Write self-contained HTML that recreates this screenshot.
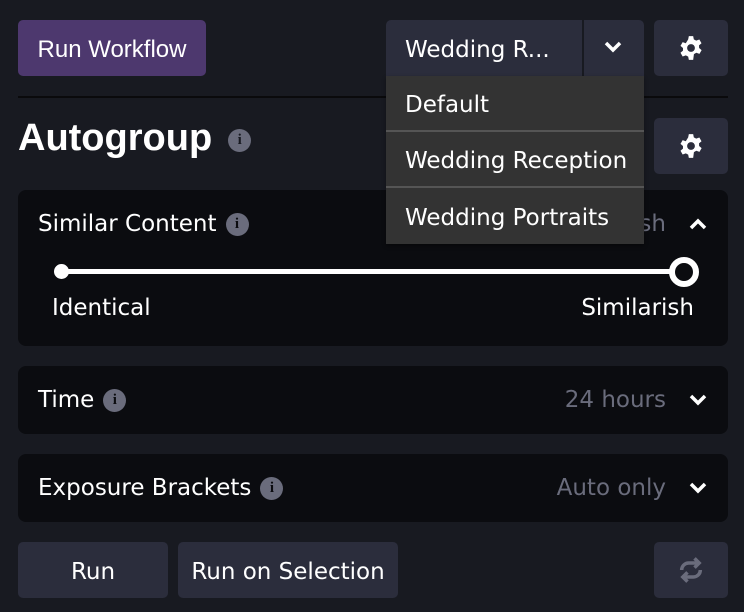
<!DOCTYPE html>
<html><head><style>
*{box-sizing:border-box;margin:0;padding:0}
body{width:744px;height:612px;background:#181a21;font-family:"DejaVu Sans","Liberation Sans",sans-serif;color:#fff;position:relative;overflow:hidden}
.a{position:absolute}
.btn{position:absolute;background:#2b2d3c;border-radius:5px;display:flex;align-items:center;justify-content:center;font-size:23px;padding-top:3px}
.panel{position:absolute;left:18px;width:710px;background:#0b0c10;border-radius:8px}
.lbl{position:absolute;left:20px;font-size:23px;display:flex;align-items:center}
.info{display:inline-block;width:23px;height:23px;border-radius:50%;background:#6a6c7c;color:#0b0c10;font-size:15px;font-weight:bold;text-align:center;line-height:23px;margin-left:9px;font-family:"Liberation Serif",serif}
.val{position:absolute;right:62px;font-size:23px;color:#6a6c7c}
.chev{position:absolute;right:20px}
.mi{height:56px;display:flex;align-items:center;padding-left:19px;padding-top:4px;font-size:23px;border-bottom:2px solid #555}
</style></head><body>
<div class="btn" style="left:18px;top:20px;width:188px;height:56px;background:#4d386e;font-family:'Liberation Sans',sans-serif;font-size:24px">Run Workflow</div>
<div class="btn" style="left:386px;top:20px;width:258px;height:56px;justify-content:flex-start;padding-left:19px;border-radius:5px 5px 0 0">Wedding R...</div>
<div class="a" style="left:582px;top:20px;width:2px;height:56px;background:#181a21"></div>
<svg class="a" style="left:603px;top:40px" width="20" height="14" viewBox="0 0 20 14"><path d="M3 3l7 7 7-7" stroke="#fff" stroke-width="3.5" fill="none"/></svg>
<div class="btn" style="left:654px;top:20px;width:74px;height:56px;padding:0"><svg width="26" height="26" viewBox="0 0 24 24"><path fill="#fff" d="M10 1h4l.6 3 2.2 1.2 2.9-1 2 3.4-2.3 2 .1 2.4 2.3 2-2 3.4-2.9-1-2.2 1.2L14 23h-4l-.6-3-2.2-1.2-2.9 1-2-3.4 2.3-2v-2.4l-2.3-2 2-3.4 2.9 1L9.4 4z"/><circle cx="12" cy="12" r="3.6" fill="#2b2d3c"/></svg></div>
<div class="a" style="left:18px;top:96px;width:710px;height:2px;background:#0a0a0c"></div>
<div class="a" style="left:18px;top:117px;font-size:38px;font-weight:bold;font-family:'Liberation Sans',sans-serif;display:flex;align-items:center">Autogroup <span class="info" style="background:#6a6c7c;color:#181a21;margin-left:16px;margin-top:4px">i</span></div>
<div class="btn" style="left:654px;top:118px;width:74px;height:56px;padding:0"><svg width="26" height="26" viewBox="0 0 24 24"><path fill="#fff" d="M10 1h4l.6 3 2.2 1.2 2.9-1 2 3.4-2.3 2 .1 2.4 2.3 2-2 3.4-2.9-1-2.2 1.2L14 23h-4l-.6-3-2.2-1.2-2.9 1-2-3.4 2.3-2v-2.4l-2.3-2 2-3.4 2.9 1L9.4 4z"/><circle cx="12" cy="12" r="3.6" fill="#2b2d3c"/></svg></div>
<div class="panel" style="top:190px;height:156px">
 <div class="lbl" style="top:21px">Similar Content<span class="info">i</span></div>
 <div class="val" style="top:21px">Similarish</div>
 <svg class="chev" style="top:27px" width="20" height="14" viewBox="0 0 20 14"><path d="M3 11l7-7 7 7" stroke="#fff" stroke-width="3.5" fill="none"/></svg>
 <div class="a" style="left:44px;top:79px;width:622px;height:5px;background:#fff"></div>
 <div class="a" style="left:36px;top:74px;width:15px;height:15px;border-radius:50%;background:#fff"></div>
 <div class="a" style="left:651px;top:67px;width:30px;height:30px;border-radius:50%;background:#0b0c10;border:6px solid #fff"></div>
 <div class="a" style="left:34px;top:105px;font-size:23px">Identical</div>
 <div class="a" style="right:34px;top:105px;font-size:23px">Similarish</div>
</div>
<div class="a" style="left:386px;top:76px;width:258px;background:#333;box-shadow:0 2px 4px rgba(0,0,0,.4)">
 <div class="mi">Default</div><div class="mi">Wedding Reception</div><div class="mi" style="border:none">Wedding Portraits</div>
</div>
<div class="panel" style="top:366px;height:68px">
 <div class="lbl" style="top:21px">Time<span class="info">i</span></div>
 <div class="val" style="top:21px">24 hours</div>
 <svg class="chev" style="top:27px" width="20" height="14" viewBox="0 0 20 14"><path d="M3 3l7 7 7-7" stroke="#fff" stroke-width="3.5" fill="none"/></svg>
</div>
<div class="panel" style="top:454px;height:68px">
 <div class="lbl" style="top:21px">Exposure Brackets<span class="info">i</span></div>
 <div class="val" style="top:21px">Auto only</div>
 <svg class="chev" style="top:27px" width="20" height="14" viewBox="0 0 20 14"><path d="M3 3l7 7 7-7" stroke="#fff" stroke-width="3.5" fill="none"/></svg>
</div>
<div class="btn" style="left:18px;top:542px;width:150px;height:56px">Run</div>
<div class="btn" style="left:178px;top:542px;width:220px;height:56px">Run on Selection</div>
<div class="btn" style="left:654px;top:542px;width:74px;height:56px;padding:0"><svg width="28" height="28" viewBox="0 0 24 24" fill="none" stroke="#6a6c7c" stroke-width="3"><path d="M4 12a6 6 0 0 1 6-6h8"/><path d="M15 2l4 4-4 4" /><path d="M20 12a6 6 0 0 1-6 6H6"/><path d="M9 14l-4 4 4 4"/></svg></div>
</body></html>
